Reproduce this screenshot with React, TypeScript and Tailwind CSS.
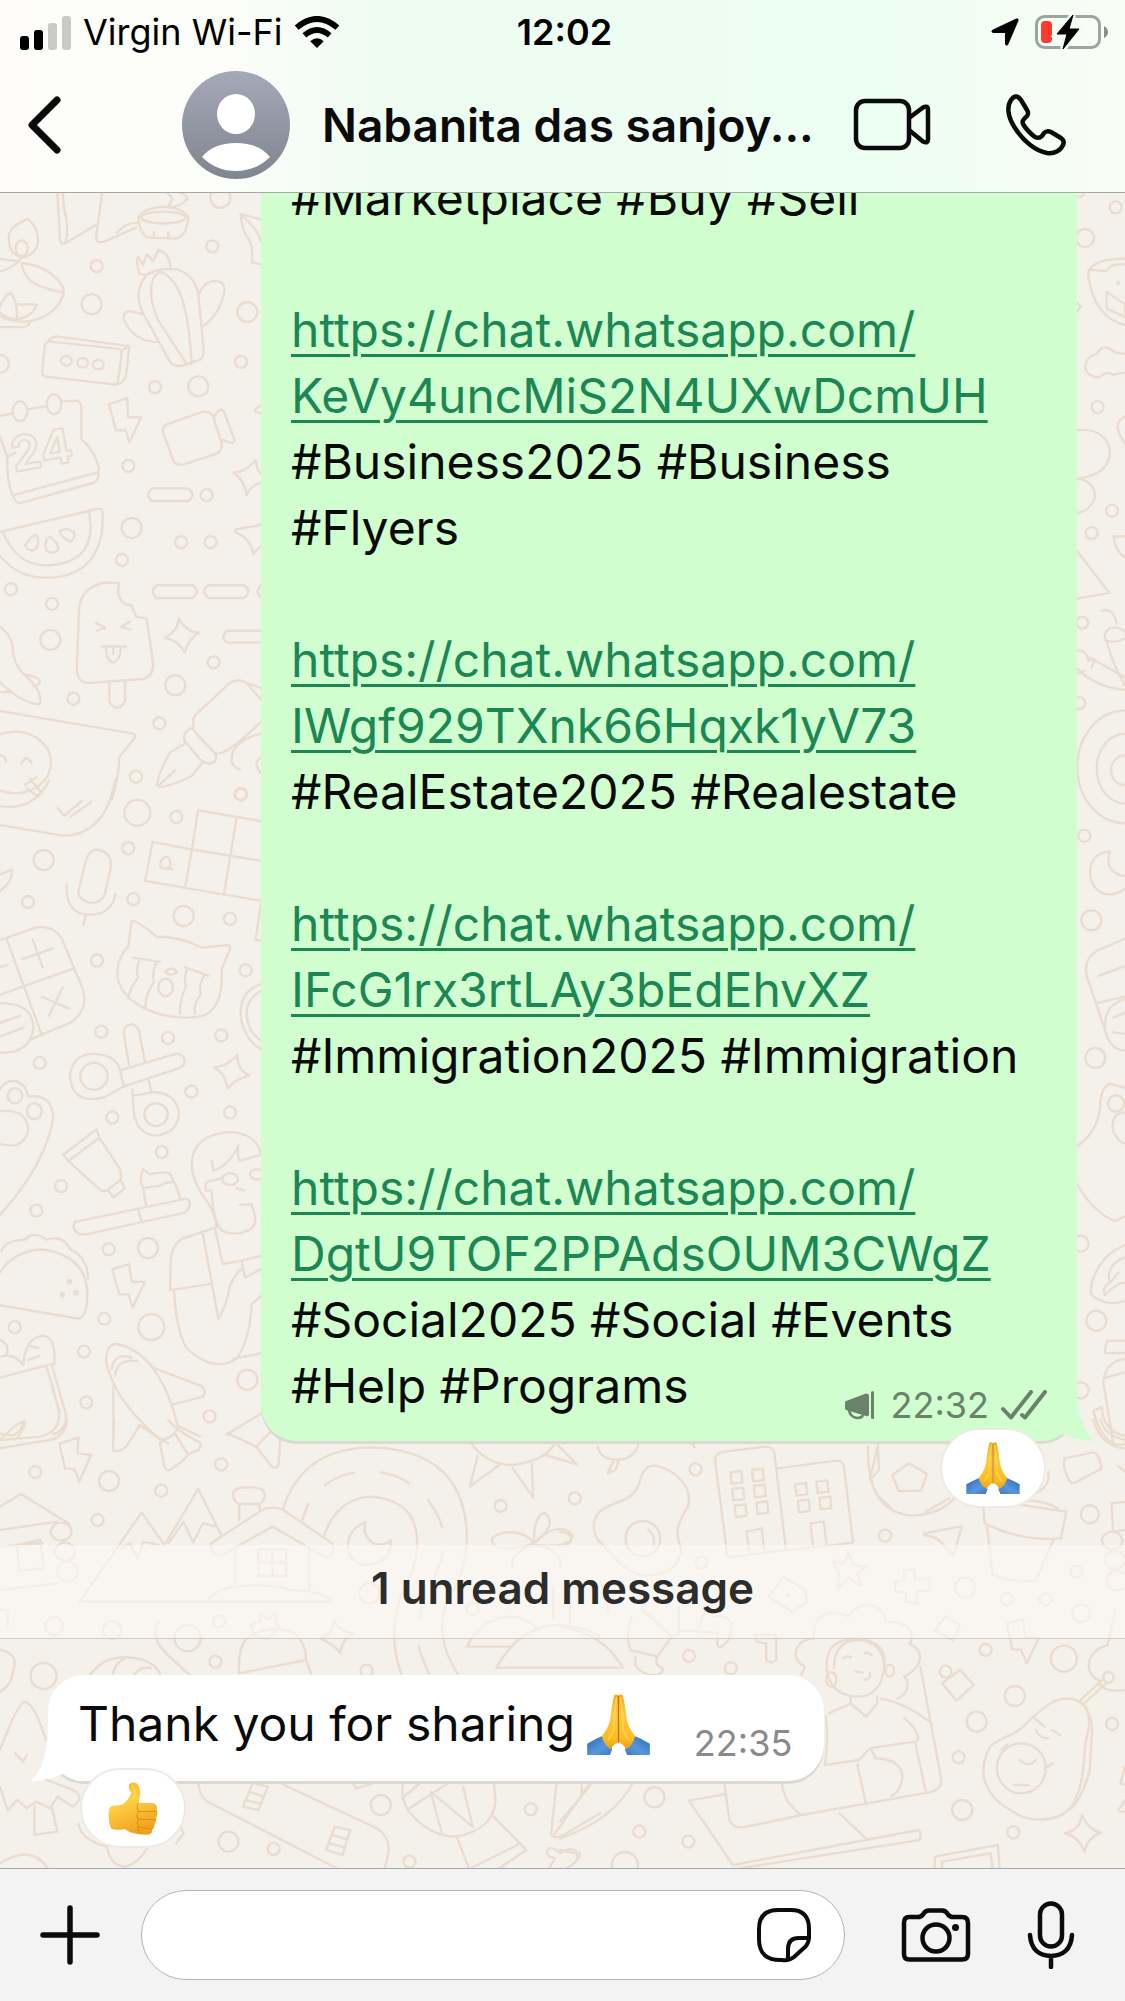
import type { ReactNode } from 'react';

type Dot = [number, number, number];

interface DoodleTile {
  x: number;
  y: number;
  sx: number;
  sy: number;
  // centre x, centre y, radius in page units
  dots: Dot[];
  ellipses: [number, number, number, number][];
  paths: string[];
}

interface MessageBlock {
  link?: string[];
  lines: string[];
}

const TILES: DoodleTile[] = [
  {
    x: 0, y: 180, sx: 0.3333, sy: 0.3954,
    dots: [
      [661, 45, 10], [637, 168, 6], [290, 218, 6], [275, 314, 10], [742, 334, 10], [723, 460, 6], [465, 524, 6],
      [595, 522, 10], [385, 723, 6], [620, 797, 6], [395, 880, 10], [543, 916, 6], [632, 916, 6], [366, 961, 6],
      [33, 1035, 6], [156, 1072, 6], [151, 1163, 10], [220, 1312, 6], [526, 1278, 10], [641, 1220, 6],
      [478, 1374, 6], [408, 1509, 6], [722, 1554, 6], [0, 465, 9],
    ],
    ellipses: [
      [65, 173, 18, 20], [490, 95, 66, 15], [199, 457, 16, 12], [248, 462, 16, 12], [295, 467, 16, 12],
      [60, 585, 22, 25], [162, 567, 22, 25], [45, 1473, 108, 78],
    ],
    paths: [
      'M0 232C25 225 50 215 65 197C50 190 25 185 26 145C30 115 60 110 82 98C110 115 118 145 112 165C105 185 80 195 65 197',
      'M65 210Q130 215 170 250Q195 270 190 290Q170 340 100 355Q50 365 0 345M65 215Q75 250 110 265Q150 278 190 285M0 200L50 205M0 320Q15 290 32 286Q55 310 50 350M50 315L110 315Q100 345 50 352Q20 352 0 335M0 372L70 372Q90 368 88 360',
      'M172 30L180 152Q182 165 200 158L285 115M188 30L192 70Q208 120 198 155M307 30L288 145Q290 160 310 157L410 120M350 133Q380 105 420 108',
      'M415 95Q418 130 440 145L530 148Q560 140 565 95Q550 70 490 68Q430 70 415 95M495 30Q530 45 505 65M560 48Q545 70 500 68M540 32Q560 35 562 50M462 132V145M505 132V145',
      'M784 100L722 86Q725 130 750 155Q760 175 755 208L784 214M725 90Q770 120 784 155',
      'M440 240C410 270 410 300 425 330L510 460Q520 472 545 470L600 455Q612 450 610 420L595 290Q585 240 530 226Q470 222 440 240ZM480 232C440 250 450 310 475 355L560 465M480 232C540 250 565 320 575 465M440 240Q420 240 418 235Q405 205 415 195L428 215L440 188L460 205L475 177Q510 185 512 222M597 290Q610 255 650 255Q680 260 672 290Q650 350 608 370M425 340Q370 320 370 350Q400 410 478 410',
      'M145 408L355 427Q368 430 364 445L355 505Q352 518 340 517L135 497Q125 493 127 480L135 415ZM145 408Q155 395 175 396L388 420L378 495Q370 515 350 517M388 420L365 432',
      'M0 597L40 590M82 580L140 572M185 560L230 558Q245 560 244 580L244 655Q290 690 296 730Q298 755 285 765L60 817Q45 817 40 800Q20 770 22 700L0 650M40 797L290 740M22 700L45 690',
      'M327 567L382 552L384 600L424 600L388 663L377 633L348 633Z',
      'M490 640Q485 625 500 618L610 586Q635 585 640 600L665 665Q668 685 650 692L550 720Q525 722 520 710ZM642 605Q645 585 665 580Q672 583 674 590L703 655Q705 665 695 665L668 658',
      'M457 780H565Q590 796 565 812H457Q433 796 457 780ZM470 1025H578Q603 1041 578 1057H470Q446 1041 470 1025ZM625 1025H733Q758 1041 733 1057H625Q601 1041 625 1025ZM784 1140H682Q658 1155 682 1170H784M784 1025Q762 1041 784 1057',
      'M700 740Q735 740 768 708Q768 730 784 745M784 765Q755 770 740 797Q735 760 700 740M784 872L710 883Q700 890 712 893Q750 905 760 945L784 925M784 570Q762 580 764 586L784 590',
      'M0 890L290 832Q308 828 308 845C312 920 280 1005 140 1006Q50 1005 0 950M8 890Q50 975 140 975Q270 970 272 880L268 838M75 925Q90 900 110 898Q122 920 105 935Q85 940 75 925ZM148 902Q175 915 175 935Q160 948 140 938Q130 915 148 902ZM178 888Q200 878 222 890Q228 905 212 915Q185 905 178 888Z',
      'M358 1020L315 1018Q240 1030 237 1090L230 1240Q235 1272 265 1272L430 1262Q460 1255 460 1225L440 1110L410 1105Q400 1090 395 1075Q370 1078 358 1055Q350 1040 358 1020ZM328 1270L328 1320Q350 1350 375 1320L375 1268M305 1180L378 1180M318 1182Q318 1218 340 1220Q362 1215 362 1182M340 1182V1198M288 1120L315 1132L290 1140M390 1117L362 1130L392 1137',
      'M495 1157Q535 1140 536 1108Q560 1145 598 1145Q565 1160 555 1195Q535 1165 495 1157Z',
      'M580 1370Q578 1360 590 1350L690 1272Q715 1258 740 1272L784 1315M740 1272L784 1285M580 1370L580 1388M650 1450Q680 1455 784 1370M555 1420Q545 1400 570 1387Q580 1388 590 1400L645 1450Q655 1470 635 1475Q620 1478 600 1465ZM555 1425L510 1448Q480 1490 470 1530Q480 1545 575 1508L610 1470M478 1530L525 1493M784 1400Q690 1420 695 1470Q705 1490 720 1490M784 1460Q755 1475 784 1500',
      'M0 1130Q30 1145 38 1180Q35 1215 70 1250Q120 1280 122 1320Q120 1335 60 1310Q30 1295 0 1270M70 1250Q115 1255 120 1268Q118 1280 100 1280M0 1295H30',
      'M0 1343L400 1400Q410 1405 400 1415L358 1460Q355 1520 335 1568M65 1475Q80 1450 95 1475M0 1455Q15 1455 18 1470M75 1530L110 1510M90 1515L120 1545',
    ],
  },
  {
    x: 0, y: 780, sx: 0.3333, sy: 0.4209,
    dots: [
      [412, 78, 13], [723, 34, 6], [529, 88, 6], [385, 162, 6], [131, 190, 10], [84, 290, 6], [400, 283, 6],
      [551, 323, 10], [690, 330, 6], [291, 429, 6], [737, 452, 6], [304, 598, 6], [504, 613, 6], [664, 607, 6],
      [119, 672, 6], [574, 740, 6], [337, 802, 6], [690, 790, 6], [485, 884, 6], [183, 965, 6], [109, 1023, 6],
      [326, 1115, 6], [444, 1112, 10], [313, 1280, 6], [454, 1300, 13], [44, 1300, 6], [252, 1358, 6],
      [742, 1425, 10], [259, 1479, 6], [629, 1512, 6],
    ],
    ellipses: [
      [497, 493, 22, 21], [282, 704, 41, 32], [468, 795, 35, 27], [45, 750, 22, 18], [103, 787, 22, 19],
      [690, 948, 24, 14], [772, 937, 22, 12], [208, 1192, 5, 4], [187, 1223, 5, 4], [228, 1218, 5, 4],
    ],
    paths: [
      'M345 0Q330 70 290 100Q250 132 190 132L0 107M148 0Q100 75 0 62M173 67L193 85L245 50M212 87L274 52M80 20L115 40',
      'M435 240L458 147L576 165L594 72L784 98M576 165L784 192M435 240L784 287M555 257L576 165M672 270L710 90M784 285L767 380L784 382M480 205Q480 185 500 182Q515 190 510 207Q490 215 480 205M500 210L518 212',
      'M255 200Q265 165 290 165Q335 170 333 205L315 270Q305 292 272 292Q235 285 235 265ZM200 248Q195 320 270 320Q335 320 347 270M257 320L250 345',
      'M0 380L110 350Q170 345 190 385L250 500Q265 550 210 577L95 615M20 378L125 605M0 510L220 448M68 425L160 400M98 378L128 445M125 515L208 543M188 493L147 560M0 445L22 440M0 530Q100 530 100 590Q90 650 0 648M0 577L62 560M0 610L72 588M0 225L35 213Q40 240 0 264',
      'M395 335Q405 330 470 372Q540 372 605 398L685 392Q695 395 688 405L665 450Q672 540 610 560Q530 575 440 545Q350 510 352 455Q355 420 385 395ZM400 422L480 432M418 430Q405 450 415 470Q385 500 385 520M470 432Q455 460 462 480Q435 510 437 540M555 445L625 465M562 448Q550 470 558 490Q540 520 540 555M612 465Q595 490 602 510Q580 530 585 555M495 455Q520 440 530 457Q510 470 495 455',
      'M387 677L372 605Q370 582 395 580Q412 582 418 600L435 670M360 690L530 650Q560 655 552 675Q550 680 540 684L372 728L360 690Q350 655 285 650Q215 650 210 705Q215 770 310 755L372 728M445 710L455 742M397 735L400 780Q405 840 465 845Q535 840 537 790Q525 740 455 742L400 750M784 485Q720 500 722 560Q730 615 784 640M784 500Q738 520 740 560Q745 600 784 620',
      'M642 683Q685 680 712 653Q712 690 748 702Q705 710 683 733Q675 695 642 683Z',
      'M0 1033Q140 910 160 800Q155 745 85 752Q75 715 35 715Q15 715 0 735M0 787Q80 780 85 830Q75 870 30 868L0 865',
      'M190 890L290 830L298 850L205 905ZM205 905L295 970Q310 980 320 975L362 950Q365 935 360 925L298 850M325 975L340 992L375 970L362 952',
      'M220 1060Q225 1080 255 1080L555 1028Q575 1015 567 998Q555 993 545 997L225 1050ZM415 1020L425 1050M438 1012L430 970Q415 950 430 925L450 937Q480 930 510 935L522 955Q535 970 540 997M430 970Q460 965 475 965Q500 955 522 955',
      'M650 1062Q645 1030 625 1005C560 940 560 880 620 850C700 820 770 845 782 885M635 905L640 928Q690 915 715 868Q712 900 720 905L782 890M670 945L620 955Q610 980 630 975L635 975Q640 1050 665 1070Q700 1085 745 1070Q770 1060 765 1035L755 1010M720 1010L755 1008M710 970L735 975M650 1062L545 1090Q510 1110 512 1150L510 1212L635 1197M607 1072L655 1280Q680 1250 690 1200Q710 1170 725 1162M645 1065L668 1150L725 1142L784 1130M725 1142L735 1182L784 1162M522 1215Q530 1310 560 1350Q640 1410 710 1375Q750 1330 755 1245L784 1225M700 1375L784 1362',
      'M5 1120Q10 1095 75 1092Q100 1070 140 1092Q190 1080 210 1115Q260 1130 265 1185M0 1170Q40 1120 125 1115Q260 1130 262 1220Q262 1275 235 1280L0 1248',
      'M337 1162L387 1150L395 1192L435 1192L398 1253L385 1222L358 1222Z',
      'M0 1420L155 1388L195 1500Q210 1540 160 1555M140 1395L178 1500Q180 1550 120 1560L0 1568M70 1390Q75 1325 130 1320Q170 1325 162 1388M90 1345L115 1350M85 1378L118 1368M0 1370Q40 1360 70 1390M0 1330Q30 1340 20 1365M0 1568Q60 1520 75 1525Q70 1550 45 1568',
      'M318 1380Q320 1340 350 1340Q480 1360 535 1540Q500 1580 470 1560Q340 1470 318 1380ZM335 1400Q340 1360 395 1372M345 1415Q350 1375 412 1380M455 1395L605 1440Q620 1450 610 1465L522 1483M340 1440L340 1568M535 1535L600 1560M680 1555L784 1505',
    ],
  },
  {
    x: 0, y: 1420, sx: 0.3827, sy: 0.3333,
    dots: [
      [92, 156, 6], [285, 183, 10], [421, 212, 6], [255, 300, 6], [578, 133, 6], [1308, 258, 6], [1502, 235, 6],
      [141, 618, 9], [293, 630, 9], [490, 655, 13], [572, 605, 6], [563, 725, 6], [114, 768, 13], [958, 752, 6],
      [1235, 567, 6], [1387, 1168, 6], [995, 1155, 10], [597, 1265, 10], [715, 1287, 6], [1070, 1325, 6], [965, 520, 10],
    ],
    ellipses: [[160, 335, 27, 27], [170, 395, 27, 27], [176, 455, 27, 30]],
    paths: [
      'M155 72L205 52L202 100L238 105L207 185L195 148L170 145Z',
      'M298 0L295 90Q305 100 330 80L365 15L415 55L440 70M440 0Q460 30 525 70L520 90L495 100L480 120L445 150Q430 155 428 130L418 70L440 50M458 42L492 105',
      'M595 40L670 80L720 20M670 80L710 140Q725 150 728 130L732 60M0 40Q50 60 60 10M0 85L130 60Q170 50 175 0',
      'M0 260L55 222L165 300L180 312M0 330L150 305M0 380L110 370M0 510L150 490M45 375L105 360L115 445L50 452Z',
      'M208 545L370 278L430 375L518 207L578 345M315 385L340 370L358 415L375 365L415 375M440 370L480 305L505 368L530 310L565 320M208 545H865M545 535Q580 500 620 500Q700 490 760 510Q830 510 865 540M552 370Q545 400 575 408L712 320L850 412Q880 405 868 370L740 270Q712 255 685 270ZM615 390V495M808 390V510M675 388H748V468H675ZM712 388V468M675 428H748M625 300V252M625 252Q605 240 610 215Q620 200 650 202Q690 200 692 225Q690 250 675 252H625M678 252V275',
      'M740 265Q790 85 970 82Q1215 90 1220 350Q1220 450 1170 540Q1130 650 1200 768M848 345Q880 235 970 230Q1090 240 1090 370Q1090 440 1050 520Q1010 640 1050 768M850 195Q885 165 925 158M995 157Q1040 165 1068 190M1118 240Q1145 280 1155 320M1158 395Q1150 440 1135 470M790 300L805 252M1110 510L1098 595M1095 680Q1105 730 1125 768',
      'M955 307C895 330 890 430 960 435Q1020 430 1022 362Q1000 380 975 370Q945 345 955 307Z',
      'M1230 68Q1270 135 1340 135Q1430 120 1450 68M1248 108L1228 200L1310 130M1340 145L1393 232L1390 130M1425 105L1507 133L1452 68',
      'M1395 370C1370 330 1320 330 1290 350C1270 380 1320 400 1395 370C1395 330 1400 280 1425 280C1445 300 1440 330 1400 365C1430 330 1470 310 1495 345C1500 375 1450 380 1400 375C1440 380 1470 410 1465 440M1395 375C1350 390 1330 420 1340 440M1445 600V500M1490 610V500',
      'M1220 680Q1260 590 1340 590Q1380 595 1410 630M1220 680H1335M1297 743Q1360 615 1460 615Q1530 620 1568 650M1297 743H1568',
      'M625 760Q620 680 650 650Q710 610 770 640Q800 670 800 720L625 760M800 720L815 768M665 650L655 615L680 605L680 580L700 600L720 575V605L730 625L700 655Z',
      'M835 655Q875 640 872 600Q890 640 925 640Q890 660 890 700Q870 670 835 655Z',
      'M0 690Q50 700 35 750Q30 800 0 815M415 600C385 660 430 700 500 768M235 765Q270 710 330 712Q400 715 420 765M295 765Q300 720 340 712M350 765Q370 735 395 745M0 570H20V620',
      'M120 960Q90 850 65 845Q45 850 0 990M40 1000L60 1025L70 1005M0 1100L20 1170L45 1140L70 1165L95 1145L130 1165L150 1130L190 1160Q225 1130 190 1110L100 1070M90 1160V1245L150 1235L135 1160M205 1210Q210 1260 280 1280M470 1215L480 1240L460 1270',
      'M518 1083Q520 1135 550 1150L880 1345M720 1083L985 1225Q1020 1250 1015 1300L1005 1345M660 1090L700 1100L675 1170L635 1160ZM650 1115L690 1130M642 1140L682 1152M875 1220L915 1230L895 1305L852 1290ZM868 1245L908 1258M860 1270L900 1282M920 1083L930 1105L975 1090',
      'M1055 1083Q1040 1140 1080 1190Q1130 1250 1190 1250Q1290 1230 1295 1140L1290 1083M1050 1135L1105 1083M1070 1165L1180 1083M1155 1240L1125 1115L1235 1220L1210 1100M1195 1255L1225 1345M1290 1190L1375 1290L1305 1345M1230 1345L1360 1270',
      'M1455 1083L1440 1245Q1450 1260 1480 1240L1568 1180M1545 1083L1445 1250',
      'M1430 1290Q1440 1275 1465 1300Q1490 1275 1515 1300Q1520 1320 1480 1345M1430 1290Q1425 1310 1450 1315L1435 1345M0 1330Q80 1270 125 1345M280 1285Q290 1340 330 1340Q360 1330 385 1285',
    ],
  },
  {
    x: 560, y: 1420, sx: 0.3604, sy: 0.3333,
    dots: [
      [376, 148, 6], [902, 347, 6], [392, 427, 6], [1124, 503, 10], [1240, 538, 6], [1347, 538, 6], [1446, 580, 9],
      [1433, 455, 6], [1470, 283, 9], [358, 708, 6], [474, 745, 6], [1181, 690, 6], [1398, 716, 13], [1262, 828, 10],
      [1156, 905, 10], [1532, 912, 6], [1106, 1012, 6], [262, 1132, 10], [1116, 1170, 10], [220, 1235, 6],
      [356, 1265, 6], [1258, 1237, 6], [180, 1335, 13], [634, 525, 1],
    ],
    ellipses: [
      [230, 356, 48, 53], [1532, 362, 28, 27], [1540, 420, 28, 27], [1545, 482, 28, 30], [1280, 1045, 68, 75],
      [1070, 755, 16, 18], [1522, 772, 14, 16], [753, 778, 14, 22], [915, 752, 12, 18],
    ],
    paths: [
      'M220 190Q230 135 265 137C320 150 370 200 355 260C300 350 340 360 335 400Q320 465 240 467C170 460 150 400 105 360Q80 310 110 275C150 240 200 250 220 190ZM245 330Q265 345 260 375',
      'M105 80Q110 118 160 120Q210 115 218 68M150 120L132 160L155 150L162 125M0 620Q120 640 175 743H0M345 68Q375 70 372 82M0 335Q35 340 30 360Q25 380 0 380',
      'M465 412L430 120Q430 100 455 95L570 80Q590 80 595 100L627 390ZM605 145L765 122Q785 122 788 140L813 368L627 392M527 405L517 335L560 325L567 398M702 380L695 310L732 305L740 375',
      'M473 157L503 153L506 187L476 191ZM533 150L563 146L566 180L536 184ZM478 207L508 203L511 237L481 241ZM538 198L568 194L571 228L541 232ZM485 257L515 253L518 287L488 291ZM545 248L575 244L578 278L548 282ZM653 193L683 189L686 223L656 227ZM712 185L742 181L745 215L715 219ZM660 243L690 239L693 273L663 277ZM720 234L750 230L753 264L723 268Z',
      'M855 80Q850 280 980 287Q1100 280 1130 160M882 75L860 180L885 150ZM968 130L1018 162L1002 212L940 213L922 165ZM885 230L925 272M885 230Q900 260 925 272M1015 275L1080 235M1355 155V180Q1350 205 1310 225',
      'M1010 340L1110 320Q1118 322 1112 332L1090 410L1060 370Q1045 350 1010 345Z',
      'M1175 265L1178 310Q1280 365 1390 355L1405 275Q1300 260 1210 240M1185 320L1200 465Q1260 490 1320 482L1370 358M1280 245Q1330 235 1380 265',
      'M1400 115L1480 97Q1495 100 1498 125L1503 145L1430 188Q1415 190 1410 175L1398 140ZM1480 0Q1500 80 1568 85M1500 0Q1510 45 1568 60M1568 245L1530 250L1535 335L1568 330M1568 155L1550 140',
      'M755 420L785 435L800 400L815 435L850 440L825 460L835 495L800 475L770 505L775 465ZM955 450H985V480L1025 475V510L990 515V550L960 545V518L930 515V485L955 482Z',
      'M620 470L680 510L685 545L645 577L580 530ZM1070 588L1110 615L1090 660L1040 632ZM1240 610L1285 598L1290 650L1328 655L1295 730L1280 690L1255 688Z',
      'M200 590Q180 640 195 690L270 710L310 650L230 570M310 650L345 630L440 640Q430 680 445 683Q480 660 475 610Q460 580 430 590M210 710Q200 750 250 765Q285 770 285 745Q260 735 270 712M330 560V635M400 575L385 620M540 645H600V720Q585 735 572 720V670L545 665ZM0 425V440M110 478L135 575',
      'M755 795Q730 750 745 700C760 640 890 640 900 710C905 790 870 830 830 830Q780 830 755 795ZM760 745Q760 660 830 660Q895 665 900 740M680 740C640 720 645 660 705 655C700 590 740 560 800 590C830 540 890 540 905 605C960 600 990 640 970 672C1010 690 1010 740 955 770C975 790 960 830 935 835M680 740L670 765M785 715Q795 705 808 712M845 700Q855 695 865 705M820 755L840 758M845 780Q865 775 860 760',
      'M805 830L808 850L745 880M880 830V850L850 890L808 852M890 835Q960 850 1025 905M1000 740L1058 1080Q1060 1110 1020 1118L670 1185Q620 1150 615 1083M738 890Q745 960 735 1035L830 1020L860 985L985 965Q1000 960 990 940Q980 915 955 895M865 990L875 1015Q950 1020 950 1070Q945 1115 920 1128M825 1035L850 1155M985 965L1015 1115',
      'M455 1083L470 1200Q480 1225 510 1222L670 1185M460 1122L358 1142L480 1335L995 1230Q1005 1240 998 1260L500 1345M775 1180L850 1257',
      'M1290 915C1350 850 1380 830 1420 837C1475 850 1475 900 1460 960C1450 1020 1460 1080 1420 1160C1380 1210 1300 1210 1250 1170C1180 1130 1160 1060 1185 1000C1200 950 1250 960 1290 915ZM1460 870Q1480 900 1475 950L1470 1050Q1450 1130 1420 1165M1320 930Q1330 955 1355 955M1318 895L1345 920M1365 930L1388 945M1275 1020Q1300 1045 1320 1020M1260 1095H1300M1225 990L1240 975M1345 1045L1368 1030',
      'M1440 845L1505 780M1450 855L1515 790M1568 810Q1500 820 1495 780C1450 760 1460 690 1520 675L1540 570M1568 1040L1555 1090L1568 1095M1550 1170L1568 1140M1555 1175H1568',
      'M1400 1240Q1445 1230 1448 1185Q1465 1230 1502 1238Q1465 1250 1455 1295Q1440 1250 1400 1240ZM1060 790L1110 750L1148 795L1100 842Z',
      'M1040 1345V1310L1215 1275L1220 1345M1060 1345V1325L1195 1300L1200 1345M60 1083V1130M205 1083Q150 1200 0 1255M95 1083L0 1205M0 1290L45 1300Q60 1320 20 1345',
    ],
  },
  {
    x: 1050, y: 180, sx: 0.3333, sy: 0.829,
    dots: [
      [197, 33, 6], [105, 70, 9], [143, 274, 6], [186, 399, 6], [125, 426, 6], [97, 534, 6], [88, 631, 6],
      [103, 791, 6], [124, 893, 10], [136, 1059, 10], [92, 1283, 8], [139, 1376, 10], [92, 1460, 8], [205, 124, 1],
    ],
    ellipses: [[225, 708, 143, 68], [225, 710, 85, 42], [225, 712, 42, 18], [198, 1114, 24, 10]],
    paths: [
      'M225 95C160 95 115 100 115 115Q130 165 225 175M115 108L170 110Q180 100 225 102M170 135L225 150V165L170 155ZM82 20Q100 22 102 15M82 148L92 153L82 158',
      'M105 225Q110 212 140 210Q160 195 195 208L225 210M105 225Q110 238 150 238Q165 230 190 235L225 232M225 285Q200 290 203 300Q210 310 225 318',
      'M82 302C150 298 180 315 180 330C175 350 130 358 82 360C125 362 135 375 135 382Q125 398 82 402M82 448L178 498L82 505M225 430L190 430Q200 450 225 455',
      'M225 553Q195 560 165 555C160 540 195 535 225 545M170 557Q190 585 225 610M155 520Q190 515 200 535M82 568Q110 566 115 580L135 578L125 588M82 595L102 592M120 576L225 600M82 590Q140 612 225 615',
      'M180 810C100 810 100 860 180 862Q210 860 225 855M180 810Q160 835 225 840',
      'M225 915L140 930Q100 940 110 960L165 1025M145 960L225 948M140 993L225 985M225 988Q160 995 165 1025Q180 1050 225 1050M190 1010L225 1005M190 1028L225 1030',
      'M82 1165Q140 1150 150 1120Q150 1095 180 1090L225 1095M82 1212Q130 1245 195 1256L225 1250M225 1125Q185 1125 188 1145Q200 1160 225 1162',
      'M225 1285C150 1295 115 1330 125 1345Q170 1360 225 1352M225 1300C180 1305 170 1320 180 1330M165 1345Q200 1330 225 1330M165 1345Q155 1335 180 1330L205 1318',
      'M175 1400H225M165 1415H225M165 1415Q165 1402 175 1400M225 1422Q165 1425 160 1450L190 1525M165 1445L225 1438M130 1485Q160 1530 225 1525M130 1485L155 1480Q160 1510 225 1515',
    ],
  },
];

const BLOCKS: MessageBlock[] = [
  { lines: ['#Marketplace #Buy #Sell'] },
  { link: ['https://chat.whatsapp.com/', 'KeVy4uncMiS2N4UXwDcmUH'], lines: ['#Business2025 #Business', '#Flyers'] },
  { link: ['https://chat.whatsapp.com/', 'IWgf929TXnk66Hqxk1yV73'], lines: ['#RealEstate2025 #Realestate'] },
  { link: ['https://chat.whatsapp.com/', 'IFcG1rx3rtLAy3bEdEhvXZ'], lines: ['#Immigration2025 #Immigration'] },
  { link: ['https://chat.whatsapp.com/', 'DgtU9TOF2PPAdsOUM3CWgZ'], lines: ['#Social2025 #Social #Events'] },
];

function Wallpaper() {
  return (
    <svg
      className="absolute inset-0 h-full w-full"
      viewBox="0 0 1125 2001"
      preserveAspectRatio="xMidYMin slice"
      fill="none"
      stroke="#eaddd0"
      strokeWidth="2.4"
      strokeLinecap="round"
      strokeLinejoin="round"
      aria-hidden="true"
    >
      {TILES.map(t => (
        <g key={`${t.x}-${t.y}`}>
          {t.dots.map(([cx, cy, r]) => (
            <circle key={`${cx}-${cy}`} cx={t.x + cx * t.sx} cy={t.y + cy * t.sy} r={r} />
          ))}
          <g transform={`translate(${t.x} ${t.y}) scale(${t.sx} ${t.sy})`}>
            {t.ellipses.map(([cx, cy, rx, ry]) => (
              <ellipse key={`${cx}-${cy}`} cx={cx} cy={cy} rx={rx} ry={ry} vectorEffect="non-scaling-stroke" />
            ))}
            {t.paths.map(d => (
              <path key={d} d={d} vectorEffect="non-scaling-stroke" />
            ))}
          </g>
        </g>
      ))}
      {/* desk calendar date */}
      <text x="14" y="472" transform="rotate(-10 14 472)" fontSize="48" fontWeight="700" strokeWidth="2">
        24
      </text>
    </svg>
  );
}

function PrayEmoji({ className }: { className: string }) {
  return (
    <svg className={className} viewBox="0 0 160 156" role="img" aria-label="Folded hands">
      <defs>
        <linearGradient id="skin" x1="0" y1="0" x2="0" y2="1">
          <stop offset="0" stopColor="#f3ab1a" />
          <stop offset="0.35" stopColor="#ffc83a" />
          <stop offset="0.8" stopColor="#fdbb22" />
          <stop offset="1" stopColor="#ec9d15" />
        </linearGradient>
        <linearGradient id="sleeve" x1="0" y1="0" x2="1" y2="1">
          <stop offset="0" stopColor="#2f67ae" />
          <stop offset="0.6" stopColor="#5797de" />
          <stop offset="1" stopColor="#3d78c0" />
        </linearGradient>
      </defs>
      {[0, 1].map(side => (
        <g key={side} transform={side ? 'translate(160 0) scale(-1 1)' : undefined}>
          <path d="M0 127Q18 116 40 107L64 141L58 156H0Z" fill="url(#sleeve)" />
          <path d="M79 3Q74-1 69 3C65 20 62 38 60 53C59 75 50 92 37 108Q44 132 61 142Q66 128 79 124Z" fill="url(#skin)" />
          <path d="M75 8Q68 60 68 92Q62 108 53 118" fill="none" stroke="#ffd95c" strokeWidth="5" opacity="0.7" />
        </g>
      ))}
      <path d="M80 4V124" stroke="#b5740d" strokeWidth="3" />
    </svg>
  );
}

function ThumbEmoji({ className }: { className: string }) {
  return (
    <svg className={className} viewBox="0 0 148 158" role="img" aria-label="Thumbs up">
      <defs>
        <linearGradient id="thumb" x1="0" y1="0" x2="0.4" y2="1">
          <stop offset="0" stopColor="#f5b323" />
          <stop offset="0.45" stopColor="#ffce45" />
          <stop offset="1" stopColor="#f0a41c" />
        </linearGradient>
      </defs>
      <path
        d="M62 8Q70-3 84 4Q96 12 95 36Q94 50 91 62L136 63Q148 68 145 82Q150 96 143 105Q145 118 138 126Q138 139 130 142Q135 156 112 157Q76 158 48 140Q26 146 8 138Q-3 106 4 78Q8 70 20 70Q36 70 44 66Q62 52 69 32Q60 20 62 8Z"
        fill="url(#thumb)"
      />
      <path d="M90 64Q82 76 92 88H142M90 88Q80 100 92 112H141M90 112Q82 124 94 134L130 141M89 132Q84 148 98 152" fill="none" stroke="#d4880f" strokeWidth="3" opacity="0.75" />
      <path d="M72 12Q84 30 76 48" fill="none" stroke="#ffe07a" strokeWidth="6" strokeLinecap="round" opacity="0.7" />
    </svg>
  );
}

function StatusBar() {
  return (
    <div className="grid h-16 grid-cols-[1fr_auto_1fr] items-center pl-5 pr-4 pb-px text-[36px] leading-10 text-black">
      <div className="flex items-center gap-3">
        <svg className="h-[37px] w-[51px]" viewBox="0 0 51 37" aria-hidden="true">
          <rect x="0" y="23" width="9" height="14" rx="3" />
          <rect x="14" y="17" width="9" height="20" rx="3" />
          <rect x="28" y="10" width="9" height="27" rx="3" fill="#c9c9c8" />
          <rect x="42" y="3" width="9" height="34" rx="3" fill="#c9c9c8" />
        </svg>
        <span>Virgin Wi-Fi</span>
        <svg className="h-8 w-[46px]" viewBox="0 0 46 33" aria-hidden="true">
          <path d="M23 33L16 26Q23 20 30 26Z" />
          <path d="M10 20Q23 9 36 20" fill="none" stroke="#000" strokeWidth="6" />
          <path d="M2 12Q23-6 44 12" fill="none" stroke="#000" strokeWidth="6" />
        </svg>
      </div>
      <span className="font-semibold">12:02</span>
      <div className="flex items-center justify-end gap-4">
        <svg className="h-7 w-7" viewBox="0 0 26 26" aria-hidden="true">
          <path d="M1.500 11L23.500 0.500Q26 0 25.500 2.500L16 24.500Q13.500 27 13 24V14H2Q-1 13 1.500 11Z" />
        </svg>
        <svg className="h-9 w-[74px]" viewBox="0 0 74 36" aria-hidden="true">
          <rect x="1.500" y="2.500" width="63" height="31" rx="8" fill="none" stroke="#9aa79c" strokeWidth="3" />
          <path d="M69 12Q73 14 73 18Q73 22 69 24Z" fill="#8a9089" />
          <rect x="6" y="7" width="11" height="22" rx="4" fill="#fc3b30" />
          <path d="M38 1L22 20H32L28 35L44 15H34Z" stroke="#effdf3" strokeWidth="6" />
          <path d="M38 1L22 20H32L28 35L44 15H34Z" stroke="#000" strokeWidth="1" strokeLinejoin="round" />
        </svg>
      </div>
    </div>
  );
}

function ChatHeader() {
  return (
    <header className="relative z-10 shrink-0 border-b border-[#a5aaa5] bg-[linear-gradient(90deg,#fefdfb_0%,#fcfdf9_20%,#edfcf1_36%,#edfef2_78%,#f9fdf6_100%)]">
      <StatusBar />
      <div className="flex h-32 items-center pl-7 pr-[58px] pb-1.5">
        <button type="button" aria-label="Back" className="w-[154px] shrink-0">
          <svg className="h-[58px] w-9" viewBox="0 0 36 58" fill="none" stroke="#0b0b0b" strokeWidth="7" strokeLinecap="round" strokeLinejoin="round">
            <path d="M29 4L4 29L29 54" />
          </svg>
        </button>
        <svg className="h-[108px] w-[108px] shrink-0" viewBox="0 0 108 108" role="img" aria-label="Profile photo">
          <defs>
            <linearGradient id="avatar" x1="0" y1="0" x2="0" y2="1">
              <stop offset="0" stopColor="#a5a8b8" />
              <stop offset="1" stopColor="#80858f" />
            </linearGradient>
          </defs>
          <circle cx="54" cy="54" r="54" fill="url(#avatar)" />
          <ellipse cx="54" cy="43" rx="19" ry="20" fill="#fff" />
          <path d="M20 86Q31 72 54 72Q77 72 88 86Q74 100 54 100Q34 100 20 86Z" fill="#fff" />
        </svg>
        <h1 className="ml-8 flex-1 whitespace-nowrap text-[46px] font-semibold leading-[56px] text-[#0b0b0b]">
          Nabanita das sanjoy...
        </h1>
        <div className="flex shrink-0 items-center gap-[74px]">
          <button type="button" aria-label="Video call">
            <svg className="h-[54px] w-[78px]" viewBox="0 0 78 54" fill="none" stroke="#0b0b0b" strokeWidth="4.500" strokeLinejoin="round">
              <rect x="3" y="3" width="53" height="47" rx="9" />
              <path d="M56 20L70 9.500Q75 7 75 12V41Q75 46 70 43.500L56 32" />
            </svg>
          </button>
          <button type="button" aria-label="Voice call">
            <svg className="h-[62px] w-[62px]" viewBox="0 0 62 62" fill="none" stroke="#0b0b0b" strokeWidth="4.500" strokeLinejoin="round">
              <path d="M6 6C2 12 2 22 10 34C19 48 31 57 42 59C50 60 56 56 58 51Q60 47 56 44L46 38Q42 36 39 39L37 42Q34 45 30 43C26 40 21 35 18 30Q17 27 19 25L22 22Q24 19 22 16L16 6Q11-1 6 6Z" />
            </svg>
          </button>
        </div>
      </div>
    </header>
  );
}

function Reaction({ children, className }: { children: ReactNode; className: string }) {
  return (
    <div className={`absolute flex h-20 w-[106px] items-center justify-center rounded-full border-2 border-[#eeebe6] bg-white ${className}`}>
      {children}
    </div>
  );
}

function OutgoingMessage() {
  return (
    <article className="relative ml-[261px] mr-12 shrink-0 rounded-b-[36px] bg-[#d0fecf] px-[30px] pb-4 text-[48px] leading-[66px] text-[#0a0a0a] shadow-[0_3px_0_#dcd8d2]">
      <svg className="absolute -right-[17px] bottom-0 h-14 w-[54px]" viewBox="0 0 54 56" aria-hidden="true">
        <path d="M37 0Q37 40 54 56Q38 56 22 49L8 56H0V0Z" fill="#d0fecf" />
      </svg>
      <div className="relative">
        {BLOCKS.map((block, i) => (
          <p key={i} className={i === BLOCKS.length - 1 ? 'whitespace-nowrap' : 'mb-[66px] whitespace-nowrap'}>
            {block.link && (
              <a
                href={block.link.join('')}
                className="text-[#1b8755] underline decoration-[3px] underline-offset-[7px]"
              >
                {block.link[0]}
                <br />
                {block.link[1]}
              </a>
            )}
            {block.lines.map((line, n) => (
              <span key={line}>
                {(block.link || n > 0) && <br />}
                {line}
              </span>
            ))}
          </p>
        ))}
        <div className="flex h-[72px] justify-between">
          <p>#Help #Programs</p>
          <div className="flex items-center gap-3 self-end text-[36px] leading-10 text-[#68836a]">
            <svg className="mr-1 h-[30px] w-[30px]" viewBox="0 0 30 30" fill="#68836a" aria-hidden="true">
              <path d="M1 11L21 3.500Q24 3 24 6V24Q24 27 21 26L1 20Q0 19 0 18V13Q0 11 1 11Z" />
              <path d="M4 20Q5 27 12 28Q17 28 18 25" fill="none" stroke="#68836a" strokeWidth="2.500" />
              <rect x="26" y="1" width="3" height="28" rx="1.500" />
            </svg>
            <time>22:32</time>
            <svg className="h-[30px] w-[46px]" viewBox="0 0 46 30" fill="none" stroke="#68836a" strokeWidth="4" strokeLinecap="round" strokeLinejoin="round" aria-hidden="true">
              <path d="M2 19L10 27.500L30 2M21 25L24 27.500L44 2" />
            </svg>
          </div>
        </div>
      </div>
      <Reaction className="-bottom-[67px] right-[31px]">
        <PrayEmoji className="h-[52px] w-[54px]" />
      </Reaction>
    </article>
  );
}

function IncomingMessage() {
  return (
    <article className="relative ml-12 flex w-fit shrink-0 items-end rounded-[36px] bg-white pl-[30px] pr-8 text-[48px] leading-[66px] text-[#0a0a0a] shadow-[0_3px_0_#dcd8d2]">
      <svg className="absolute -left-[17px] bottom-0 h-14 w-[54px]" viewBox="0 0 54 56" aria-hidden="true">
        <path d="M17 0Q17 40 0 56Q16 56 32 49L46 56H54V0Z" fill="#fff" />
      </svg>
      <p className="relative flex items-center pt-4 pb-6">
        Thank you for sharing
        <PrayEmoji className="ml-3 h-[61px] w-[63px]" />
      </p>
      <time className="relative ml-11 pb-[18px] text-[36px] leading-10 text-[#8a8a8a]">22:35</time>
      <Reaction className="-bottom-[67px] left-8">
        <ThumbEmoji className="h-[53px] w-[50px]" />
      </Reaction>
    </article>
  );
}

function Composer() {
  return (
    <footer className="relative z-10 flex h-[133px] shrink-0 items-center border-t border-[#a8a8a8] bg-[#f3f3f3] pl-10 pr-[50px]">
      <button type="button" aria-label="Attach" className="shrink-0">
        <svg className="h-[60px] w-[60px]" viewBox="0 0 60 60" fill="none" stroke="#0b0b0b" strokeWidth="5.500" strokeLinecap="round">
          <path d="M30 3V57M3 30H57" />
        </svg>
      </button>
      <div className="ml-[41px] flex h-[90px] min-w-0 flex-1 items-center rounded-full border border-[#b4b4b4] bg-white pl-9 pr-8">
        <input type="text" aria-label="Message" className="w-full min-w-0 flex-1 bg-transparent text-[48px] outline-none" />
        <button type="button" aria-label="Stickers" className="shrink-0">
          <svg className="h-14 w-14" viewBox="0 0 56 56" fill="none" stroke="#0b0b0b" strokeWidth="4" strokeLinecap="round" strokeLinejoin="round">
            <path d="M28 3H35Q53 3 53 22V30Q53 36 49 40L38 50Q33 54 26 53Q3 54 3 32V22Q3 3 22 3Z" />
            <path d="M53 31H43Q32 31 32 42V52" />
          </svg>
        </button>
      </div>
      <button type="button" aria-label="Camera" className="ml-14 shrink-0">
        <svg className="h-[54px] w-[70px]" viewBox="0 0 70 54" fill="none" stroke="#0b0b0b" strokeWidth="4.500" strokeLinejoin="round">
          <path d="M8 9H17Q20 9 22 6.500Q24 2.500 28 2.500H41Q45 2.500 47 6.500Q49 9 52 9H61Q67 9 67 15V46Q67 51.500 61 51.500H8Q3 51.500 3 46V15Q3 9 8 9Z" />
          <circle cx="35" cy="30" r="13.500" />
          <circle cx="54.500" cy="19.500" r="3.500" fill="#0b0b0b" stroke="none" />
        </svg>
      </button>
      <button type="button" aria-label="Voice message" className="ml-14 shrink-0">
        <svg className="h-[68px] w-12" viewBox="0 0 48 68" fill="none" stroke="#0b0b0b" strokeWidth="4.500" strokeLinecap="round">
          <rect x="13" y="2.500" width="22" height="43" rx="11" />
          <path d="M3 34C4 49 13 55 24 55S44 49 45 34M24 56V66" />
        </svg>
      </button>
    </footer>
  );
}

export default function App() {
  return (
    <div className="relative flex h-screen flex-col overflow-hidden bg-[#f4f1ea] font-['Inter',sans-serif]">
      <Wallpaper />
      <ChatHeader />
      <main className="relative flex min-h-0 flex-1 flex-col justify-end overflow-hidden pb-[87px]">
        <OutgoingMessage />
        <div className="mb-9 mt-26 flex h-[94px] shrink-0 items-center justify-center border-b border-[#d0cdc8] bg-[#fbfaf7]/60 pb-2 text-[44px] font-semibold leading-[56px] text-[#2c2c2b]">
          1 unread message
        </div>
        <IncomingMessage />
      </main>
      <Composer />
    </div>
  );
}
